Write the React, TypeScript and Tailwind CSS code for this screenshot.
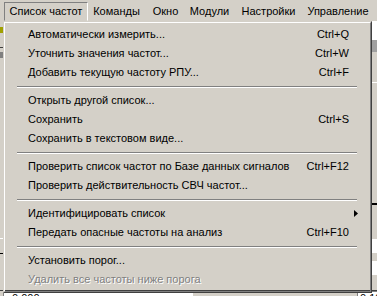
import { ReactNode } from 'react';

type Item = { label: string; shortcut?: string; sub?: boolean; disabled?: boolean };

const groups: Item[][] = [
  [
    { label: 'Автоматически измерить...', shortcut: 'Ctrl+Q' },
    { label: 'Уточнить значения частот...', shortcut: 'Ctrl+W' },
    { label: 'Добавить текущую частоту РПУ...', shortcut: 'Ctrl+F' },
  ],
  [
    { label: 'Открыть другой список...' },
    { label: 'Сохранить', shortcut: 'Ctrl+S' },
    { label: 'Сохранить в текстовом виде...' },
  ],
  [
    { label: 'Проверить список частот по Базе данных сигналов', shortcut: 'Ctrl+F12' },
    { label: 'Проверить действительность СВЧ частот...' },
  ],
  [
    { label: 'Идентифицировать список', sub: true },
    { label: 'Передать опасные частоты на анализ', shortcut: 'Ctrl+F10' },
  ],
  [
    { label: 'Установить порог...' },
    { label: 'Удалить все частоты ниже порога', disabled: true },
  ],
];

const bar = [
  { label: 'Список частот', w: 'w-[84px]', active: true },
  { label: 'Команды', w: 'w-[57px]' },
  { label: 'Окно', w: 'w-[41px]' },
  { label: 'Модули', w: 'w-[47px]' },
  { label: 'Настройки', w: 'w-[71px]' },
  { label: 'Управление', w: 'w-[68px]' },
];

function Row({ item }: { item: Item }) {
  return (
    <div className="flex h-[19px] items-center pl-[21px] pr-[19px]">
      <span
        className={
          item.disabled
            ? 'flex-1 whitespace-nowrap text-[#808080] [text-shadow:1px_1px_0_#ffffff]'
            : 'flex-1 whitespace-nowrap text-black'
        }
      >
        {item.label}
      </span>
      {item.shortcut && <span className="whitespace-nowrap">{item.shortcut}</span>}
      {item.sub && (
        <svg width="4" height="7" viewBox="0 0 4 7" className="mr-[-9px]">
          <path d="M0 0 L4 3.5 L0 7 Z" fill="#000" />
        </svg>
      )}
    </div>
  );
}

function Separator() {
  return (
    <div className="flex h-[9px] flex-col justify-center pl-[10px] pr-[11px]">
      <div className="h-px bg-[#808080]" />
      <div className="h-px bg-white" />
    </div>
  );
}

function Frame({ children }: { children: ReactNode }) {
  return (
    <div className="border border-t-[#d4d0c8] border-l-[#d4d0c8] border-r-[#404040] border-b-[#404040]">
      <div className="border border-t-white border-l-white border-r-[#808080] border-b-[#808080] p-[2px]">
        {children}
      </div>
    </div>
  );
}

export default function App() {
  return (
    <div className="relative h-[296px] w-[377px] overflow-hidden bg-[#d4d0c8] text-[11px] leading-none text-black font-['Tahoma','Liberation_Sans',sans-serif]">
      <div className="flex h-[21px] items-stretch pt-[2px] pl-[4px]">
        {bar.map((b) => (
          <div
            key={b.label}
            className={
              b.active
                ? `${b.w} flex items-center justify-center border border-t-[#808080] border-l-[#808080] border-r-white border-b-transparent`
                : `${b.w} flex items-center justify-center`
            }
          >
            {b.label}
          </div>
        ))}
      </div>

      <div className="flex h-[269px]">
        <div className="flex w-[3px] flex-col">
          <div className="h-[6px]" />
          <div className="h-[6px] bg-[#a0a000]" />
          <div className="h-[14px]" />
          <div className="h-px bg-[#404040]" />
          <div className="h-[4px]" />
          <div className="h-[6px] bg-[#808080]" />
          <div className="h-[180px]" />
          <div className="h-px bg-white" />
          <div className="h-[14px]" />
          <div className="h-px bg-black" />
        </div>
        <div className="flex-1" />
        <div className="flex w-[6px] flex-col">
          <div className="h-[19px] border-l border-[#404040] bg-white" />
          <div className="h-[12px] bg-[#a0a0a0]" />
          <div className="h-[30px]" />
          <div className="h-px bg-white" />
          <div className="h-[120px]" />
          <div className="h-[2px] bg-black" />
          <div className="h-[34px]" />
          <div className="h-[14px] bg-white" />
          <div className="h-[8px]" />
          <div className="h-[14px] bg-white" />
        </div>
      </div>

      <div className="flex h-[6px] border-t border-[#404040]">
        <div className="w-[3px]" />
        <div className="w-[190px] overflow-hidden border-l border-t border-[#808080] bg-white pl-[8px] pt-[1px]">0.000</div>
        <div className="flex-1" />
        <div className="w-[20px] overflow-hidden border-l border-t border-[#808080] bg-white pl-[2px] pt-[1px]">0.10</div>
      </div>

      <div className="absolute left-[3px] top-[21px] w-[369px]">
        <Frame>
          {groups.map((g, i) => (
            <div key={i}>
              {i > 0 && <Separator />}
              {g.map((it) => (
                <Row key={it.label} item={it} />
              ))}
            </div>
          ))}
        </Frame>
      </div>
    </div>
  );
}
